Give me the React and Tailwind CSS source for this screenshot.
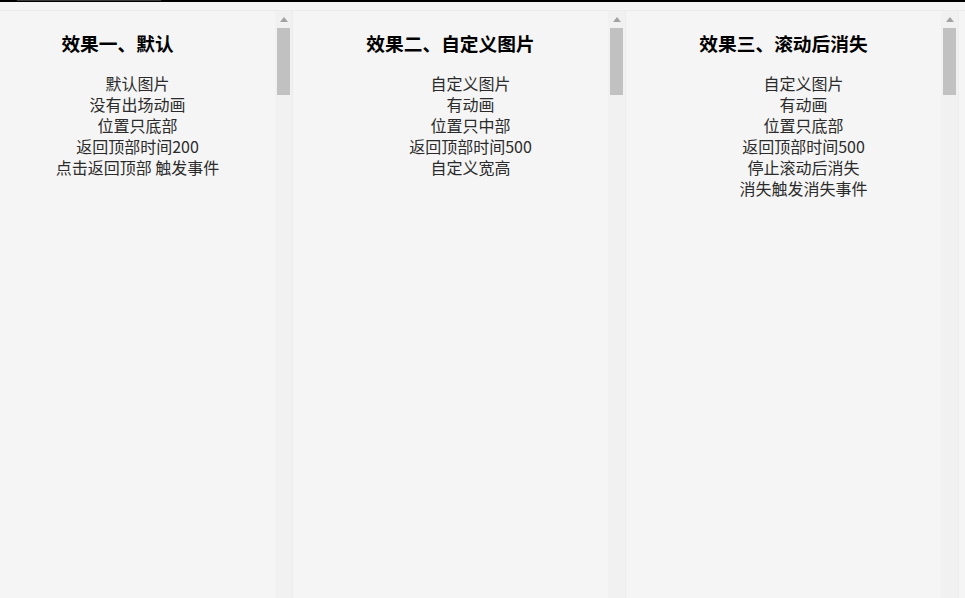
import React from 'react';

const panels = [
  {
    title: '效果一、默认',
    lines: ['默认图片', '没有出场动画', '位置只底部', '返回顶部时间200', '点击返回顶部 触发事件'],
  },
  {
    title: '效果二、自定义图片',
    lines: ['自定义图片', '有动画', '位置只中部', '返回顶部时间500', '自定义宽高'],
  },
  {
    title: '效果三、滚动后消失',
    lines: ['自定义图片', '有动画', '位置只底部', '返回顶部时间500', '停止滚动后消失', '消失触发消失事件'],
  },
];

const Scrollbar = () => (
  <div className="w-[17px] shrink-0 bg-[#f1f1f1] flex flex-col items-center">
    <div className="h-[17px] w-full flex items-center justify-center">
      <svg width="8" height="5" viewBox="0 0 8 5">
        <polygon points="4,0 8,5 0,5" fill="#a3a3a3" />
      </svg>
    </div>
    <div className="w-[13px] h-[67px] bg-[#c1c1c1]" />
  </div>
);

const Panel = ({ title, lines, first }) => (
  <div className={`flex w-[332px] shrink-0 h-full ${first ? '-ml-[40px]' : ''}`}>
    <div className="flex-1 bg-[#f5f5f5] pt-[19px]">
      <h3 className="text-center text-[18.72px] leading-[25px] font-bold text-black">{title}</h3>
      <ul className="mt-[18px] pl-[40px] text-center text-[16px] leading-[21px] text-[#2b2b2b]">
        {lines.map((l) => (
          <li key={l}>{l}</li>
        ))}
      </ul>
    </div>
    <Scrollbar />
  </div>
);

export default function App() {
  return (
    <div
      className="w-[965px] h-[598px] overflow-hidden bg-[#f5f5f5] flex flex-col"
      style={{ fontFamily: '"Noto Sans CJK SC", "Noto Sans", sans-serif' }}
    >
      <div className="h-[2px] bg-black shrink-0 flex">
        <div className="ml-[17px] w-[144px] h-[1px] bg-[#3a3a3a]" />
      </div>
      <div className="h-[8px] shrink-0" />
      <div className="h-[1px] bg-[#ebebeb] shrink-0" />
      <div className="flex-1 flex gap-[1px] bg-[#ececec] w-[959px]">
        {panels.map((p, i) => (
          <Panel key={p.title} {...p} first={i === 0} />
        ))}
      </div>
    </div>
  );
}
